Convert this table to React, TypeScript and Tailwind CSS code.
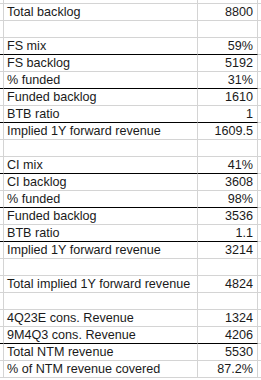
const rows: { label: string; value: string; line?: boolean }[] = [
  { label: 'Total backlog', value: '8800' },
  { label: '', value: '' },
  { label: 'FS mix', value: '59%', line: true },
  { label: 'FS backlog', value: '5192' },
  { label: '% funded', value: '31%', line: true },
  { label: 'Funded backlog', value: '1610' },
  { label: 'BTB ratio', value: '1', line: true },
  { label: 'Implied 1Y forward revenue', value: '1609.5' },
  { label: '', value: '' },
  { label: 'CI mix', value: '41%', line: true },
  { label: 'CI backlog', value: '3608' },
  { label: '% funded', value: '98%', line: true },
  { label: 'Funded backlog', value: '3536' },
  { label: 'BTB ratio', value: '1.1', line: true },
  { label: 'Implied 1Y forward revenue', value: '3214' },
  { label: '', value: '' },
  { label: 'Total implied 1Y forward revenue', value: '4824' },
  { label: '', value: '' },
  { label: '4Q23E cons. Revenue', value: '1324' },
  { label: '9M4Q3 cons. Revenue', value: '4206', line: true },
  { label: 'Total NTM revenue', value: '5530' },
  { label: '% of NTM revenue covered', value: '87.2%' },
];

export default function App() {
  return (
    <div className="w-[261px] h-[380px] overflow-hidden bg-white text-[12.6px] text-[#1a1a1a] font-['Liberation_Sans',Arial,sans-serif]">
      {/* partial row above the table */}
      <div className="flex h-[4px]">
        <div className="w-[4px] shrink-0 border-r border-b border-[#d4d4d4]" />
        <div className="w-[194px] shrink-0 border-r border-b border-[#d4d4d4]" />
        <div className="w-[60px] shrink-0 border-r border-b border-[#d4d4d4]" />
        <div className="flex-1 border-b border-[#d4d4d4]" />
      </div>

      {rows.map((r, i) => {
        const bottom = r.line ? 'border-b-black' : 'border-b-[#d4d4d4]';
        return (
          <div key={i} className="flex h-[17px]">
            <div className={`w-[4px] shrink-0 border-r border-b border-r-[#d4d4d4] ${bottom}`} />
            <div
              className={`w-[194px] shrink-0 border-r border-b border-r-[#d4d4d4] ${bottom} flex items-end pl-[3px] pb-[1px] leading-[14px] whitespace-nowrap`}
            >
              {r.label}
            </div>
            <div
              className={`w-[60px] shrink-0 border-r border-b border-r-[#d4d4d4] ${bottom} flex items-end justify-end pr-[4px] pb-[1px] leading-[14px]`}
            >
              {r.value}
            </div>
            <div className="flex-1 border-b border-[#d4d4d4]" />
          </div>
        );
      })}
    </div>
  );
}
